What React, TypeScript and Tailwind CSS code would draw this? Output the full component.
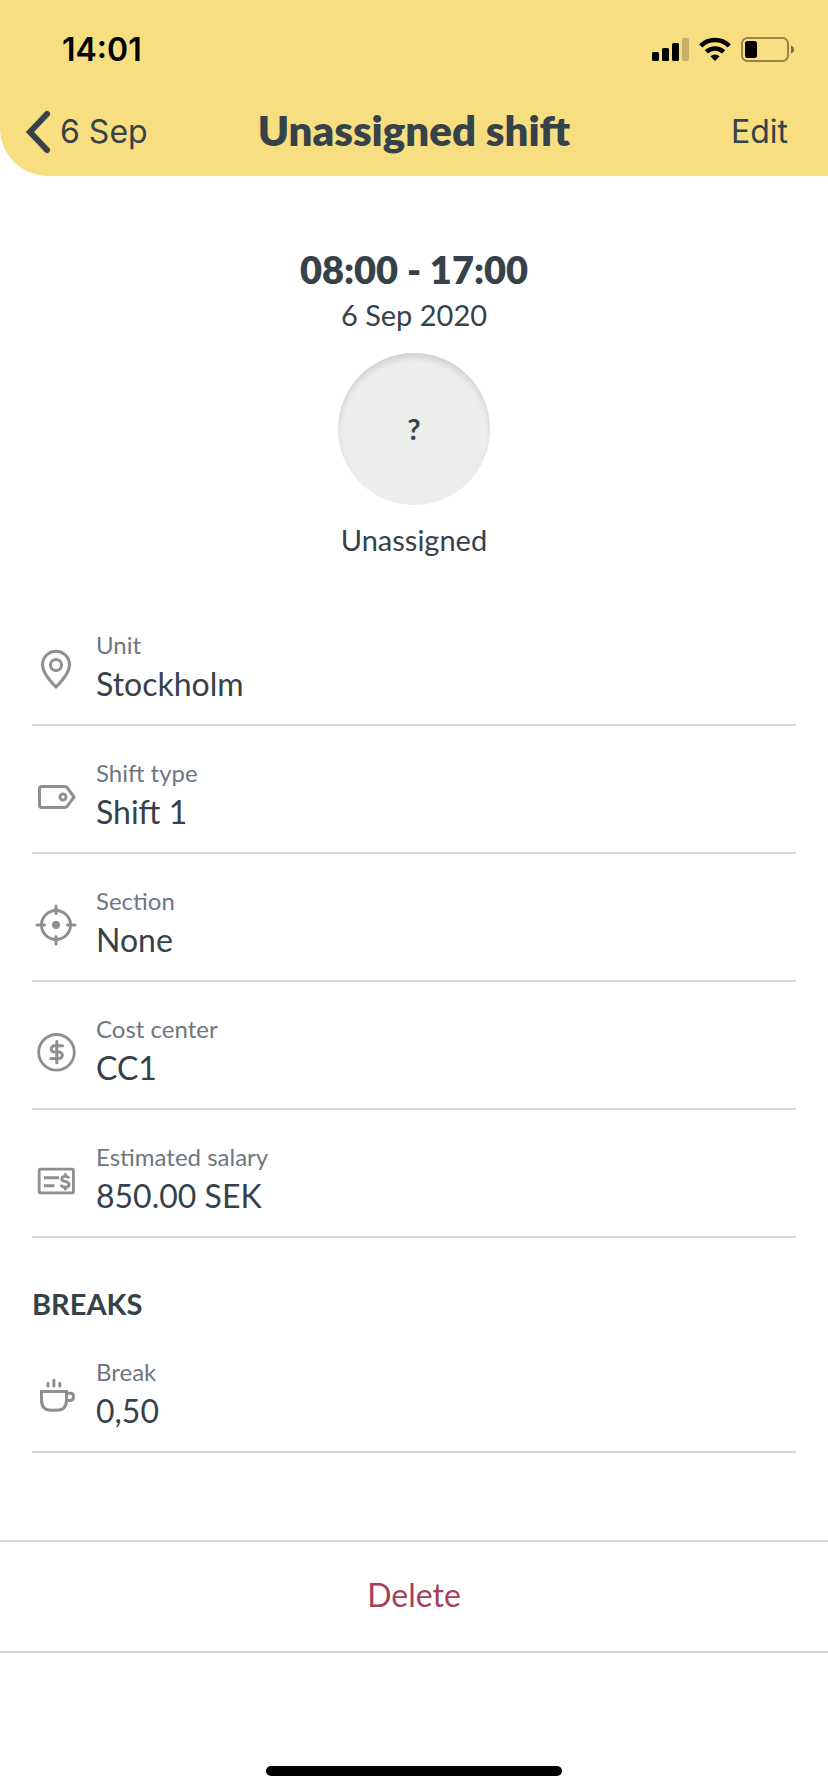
import type { ReactNode } from "react";

function Icon({ children }: { children: ReactNode }) {
  return (
    <svg
      viewBox="0 0 40 40"
      className="size-10 shrink-0 overflow-visible text-[#8e8e93]"
      fill="none"
      stroke="currentColor"
      strokeWidth="3"
      aria-hidden="true"
    >
      {children}
    </svg>
  );
}

function PinIcon() {
  return (
    <Icon>
      <path d="M20 38C15.500 33.500 6.500 24.500 6.500 15.800A13.500 13.500 0 0 1 33.500 15.800C33.500 24.500 24.500 33.500 20 38Z" />
      <circle cx="20" cy="16" r="5.500" />
    </Icon>
  );
}

function TagIcon() {
  return (
    <Icon>
      <path
        d="M6 9.500H28.500Q30.200 9.500 31.300 10.800L38 20L31.300 29.200Q30.200 30.500 28.500 30.500H6Q3.500 30.500 3.500 28V12Q3.500 9.500 6 9.500Z"
        strokeLinejoin="round"
      />
      <circle cx="27" cy="20" r="3" />
    </Icon>
  );
}

function TargetIcon() {
  return (
    <Icon>
      <circle cx="20" cy="20" r="14.500" />
      <path d="M20 1V8.500M20 31.500V39M1 20H8.500M31.500 20H39" strokeLinecap="round" />
      <circle cx="20" cy="20" r="4" fill="currentColor" stroke="none" />
    </Icon>
  );
}

function DollarIcon() {
  return (
    <Icon>
      <circle cx="20.500" cy="19.300" r="17.800" strokeWidth="2.800" />
      <path
        d="M26.500 12.800H18.300A3.100 3.100 0 0 0 18.300 19H23A3.300 3.300 0 0 1 23 25.600H15M20.800 8.500V29.800"
        strokeLinecap="round"
      />
    </Icon>
  );
}

function ChequeIcon() {
  return (
    <Icon>
      <rect x="3.200" y="8.200" width="34.200" height="23.600" rx="0.800" strokeWidth="2.800" />
      <path d="M8 16.700H23M8 24.700H18.500" />
      <path
        d="M32.800 17.400C32.400 15.800 30.800 15.300 29.300 15.300C27.300 15.300 25.700 16.200 25.700 17.900C25.700 21.500 33 19.400 33 23.400C33 25.200 31.300 26.200 29.300 26.200C27.200 26.200 25.500 25.400 25.100 23.600M29.300 12.300V15.500M29.300 26V29.300"
        strokeWidth="2.800"
      />
    </Icon>
  );
}

function CupIcon() {
  return (
    <Icon>
      <path d="M5.500 15.500H30.500V24Q30.500 34.300 20.500 34.300H15.500Q5.500 34.300 5.500 24Z" />
      <path d="M31 17.300H34.500Q37.500 17.300 37.500 20.700Q37.500 24.600 34 24.600H31" />
      <path d="M12 7.200V10M17.900 4.200V10M23.800 7.200V10" strokeLinecap="round" />
    </Icon>
  );
}

function StatusIcons() {
  return (
    <div className="flex items-center gap-[10px]" aria-hidden="true">
      <svg viewBox="0 0 37 26" className="h-[26px] w-[37px]">
        <rect x="0" y="15" width="7" height="9" rx="1.500" />
        <rect x="10" y="11" width="7" height="13" rx="1.500" />
        <rect x="20" y="6" width="7" height="18" rx="1.500" />
        <rect x="30" y="1" width="7" height="23" rx="1.500" fillOpacity="0.2" />
      </svg>
      <svg viewBox="0 0 32 26" className="h-[26px] w-8" fill="none" stroke="#000" strokeWidth="4.600">
        <path d="M1.700 8.800A20.500 20.500 0 0 1 30.300 8.800" />
        <path d="M7.400 14.900A12.400 12.400 0 0 1 24.600 14.900" />
        <path d="M16 24L11.400 19.300Q16 15.800 20.600 19.300Z" fill="#000" stroke="none" />
      </svg>
      <svg viewBox="0 0 53 26" className="h-[26px] w-[53px]">
        <rect x="1" y="1" width="46" height="23" rx="5.500" fill="none" stroke="#000" strokeOpacity="0.4" strokeWidth="2" />
        <rect x="4" y="4" width="12" height="17" rx="2.500" />
        <path d="M50 8.500Q53 9.500 53 12.500Q53 15.500 50 16.500Z" fillOpacity="0.5" />
      </svg>
    </div>
  );
}

function Row({ icon, label, value }: { icon: ReactNode; label: string; value: string }) {
  return (
    <div className="flex gap-5 border-b-2 border-[#d3d8d7] pb-5 pl-1">
      <div className="pt-[51px]">{icon}</div>
      <dl className="flex flex-col gap-1 pt-8">
        <dt className="text-2xl leading-[30px] text-[#6e7680]">{label}</dt>
        <dd className="text-[32px] leading-10">{value}</dd>
      </dl>
    </div>
  );
}

const details = [
  { icon: <PinIcon />, label: "Unit", value: "Stockholm" },
  { icon: <TagIcon />, label: "Shift type", value: "Shift 1" },
  { icon: <TargetIcon />, label: "Section", value: "None" },
  { icon: <DollarIcon />, label: "Cost center", value: "CC1" },
  { icon: <ChequeIcon />, label: "Estimated salary", value: "850.00 SEK" },
];

export default function App() {
  return (
    <div className="flex min-h-screen flex-col bg-white font-['Lato',sans-serif] text-[#36424a]">
      <header className="rounded-bl-[48px] bg-[#f7de81]">
        <div className="flex h-22 items-center justify-between pt-3 pr-[34px] pl-[62px] font-['Inter',sans-serif] text-black">
          <time className="text-[32px] leading-10 font-semibold">14:01</time>
          <StatusIcons />
        </div>
        <nav className="grid h-22 grid-cols-[1fr_auto_1fr] items-center px-6">
          <button
            type="button"
            className="flex items-center gap-2 justify-self-start font-['Inter',sans-serif] text-[32px] leading-10"
          >
            <svg viewBox="0 0 28 44" className="h-11 w-7" fill="none" stroke="currentColor" strokeWidth="6" strokeLinecap="round" strokeLinejoin="miter" aria-hidden="true">
              <path d="M23 4L6 22L23 40" />
            </svg>
            6 Sep
          </button>
          <h1 className="pb-1 text-[42px] leading-12 font-extrabold">Unassigned shift</h1>
          <button
            type="button"
            className="justify-self-end pr-4 font-['Inter',sans-serif] text-[32px] leading-10"
          >
            Edit
          </button>
        </nav>
      </header>

      <main className="flex flex-col">
        <section className="flex flex-col items-center pt-[69px]">
          <h2 className="text-[38px] leading-12 font-extrabold">08:00 - 17:00</h2>
          <p className="mt-1 text-[29px] leading-9">6 Sep 2020</p>
          <div className="mt-5 flex size-38 items-center justify-center rounded-full bg-[#eceeec] text-[29px] leading-9 font-bold shadow-[inset_0_5px_7px_-1px_rgba(0,0,0,0.13)]">
            ?
          </div>
          <p className="mt-[17px] text-[29px] leading-9">Unassigned</p>
        </section>

        <section className="mt-10 px-8">
          {details.map((d) => (
            <Row key={d.label} icon={d.icon} label={d.label} value={d.value} />
          ))}
        </section>

        <section className="mt-12 px-8">
          <h3 className="mb-[3px] text-[29px] leading-9 font-bold">BREAKS</h3>
          <Row icon={<CupIcon />} label="Break" value="0,50" />
        </section>

        <button
          type="button"
          className="mt-[87px] border-y-2 border-[#d3d8d7] pt-8 pb-9 text-[32px] leading-[41px] text-[#a5405a]"
        >
          Delete
        </button>
      </main>

      <footer className="mt-auto flex justify-center pb-4">
        <div className="h-[10px] w-[296px] rounded-full bg-black" />
      </footer>
    </div>
  );
}
